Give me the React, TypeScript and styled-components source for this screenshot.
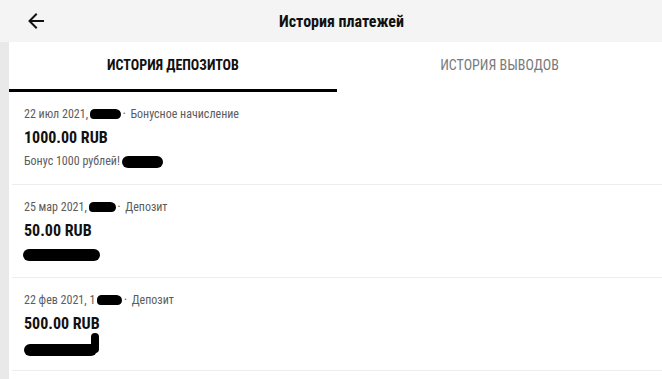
import React from "react";
import styled, { createGlobalStyle } from "styled-components";

const GlobalStyle = createGlobalStyle`
  html, body {
    margin: 0;
    padding: 0;
    background: #ffffff;
  }
  body {
    font-family: "Roboto Condensed", "Liberation Sans Narrow", Roboto, sans-serif;
    -webkit-font-smoothing: antialiased;
  }
`;

type Deposit = {
  date: string;
  hideWidth: number;
  kind: string;
  amount: string;
  note?: string;
  noteHide?: number;
  hook?: boolean;
};

const deposits: Deposit[] = [
  {
    date: "22 июл 2021,",
    hideWidth: 31,
    kind: "Бонусное начисление",
    amount: "1000.00 RUB",
    note: "Бонус 1000 рублей!",
    noteHide: 41,
  },
  {
    date: "25 мар 2021,",
    hideWidth: 27,
    kind: "Депозит",
    amount: "50.00 RUB",
  },
  {
    date: "22 фев 2021, 1",
    hideWidth: 25,
    kind: "Депозит",
    amount: "500.00 RUB",
    hook: true,
  },
];

function BackArrow() {
  return (
    <svg width="18" height="18" viewBox="0 0 18 18" fill="none">
      <path
        d="M16 9H3M9 2.5L2.5 9L9 15.5"
        stroke="#111"
        strokeWidth="2"
        strokeLinecap="square"
      />
    </svg>
  );
}

function DepositItem({ item }: { item: Deposit }) {
  return (
    <Item>
      <Meta>
        <span>{item.date}</span>
        <Blot $w={item.hideWidth} />
        <Dot>•</Dot>
        <span>{item.kind}</span>
      </Meta>
      <Amount>{item.amount}</Amount>
      <Note>
        {item.note ? (
          <>
            <span>{item.note}</span>
            <NoteBlot $w={item.noteHide ?? 40} />
          </>
        ) : item.hook ? (
          <HookBlot>
            <HookStem />
          </HookBlot>
        ) : (
          <WideBlot />
        )}
      </Note>
    </Item>
  );
}

export default function App() {
  return (
    <>
      <GlobalStyle />
      <Screen>
        <Header>
          <BackButton>
            <BackArrow />
          </BackButton>
          <Title>История платежей</Title>
        </Header>
        <Body>
          <Strip />
          <Content>
            <Tabs>
              <Tab $active>ИСТОРИЯ ДЕПОЗИТОВ</Tab>
              <Tab>ИСТОРИЯ ВЫВОДОВ</Tab>
            </Tabs>
            <List>
              {deposits.map((d) => (
                <DepositItem key={d.date} item={d} />
              ))}
            </List>
          </Content>
        </Body>
      </Screen>
    </>
  );
}

const Screen = styled.div`
  width: 662px;
  height: 379px;
  overflow: hidden;
  display: flex;
  flex-direction: column;
  background: #ffffff;
`;

const Header = styled.header`
  position: relative;
  height: 42px;
  flex-shrink: 0;
  display: flex;
  align-items: center;
  justify-content: center;
  background: #f4f4f4;
`;

const BackButton = styled.button`
  position: absolute;
  left: 27px;
  top: 12px;
  width: 18px;
  height: 18px;
  padding: 0;
  border: 0;
  background: none;
  display: flex;
`;

const Title = styled.h1`
  margin: 0 0 0 21px;
  font-size: 16px;
  font-weight: 700;
  color: #111;
`;

const Body = styled.div`
  flex: 1;
  display: flex;
`;

const Strip = styled.div`
  width: 9px;
  flex-shrink: 0;
  background: #e9e9e9;
`;

const Content = styled.div`
  flex: 1;
  display: flex;
  flex-direction: column;
`;

const Tabs = styled.nav`
  display: grid;
  grid-template-columns: 328px 1fr;
  height: 50px;
`;

const Tab = styled.div<{ $active?: boolean }>`
  display: flex;
  align-items: center;
  justify-content: center;
  padding-bottom: 1px;
  font-size: 14px;
  font-weight: ${({ $active }) => ($active ? 700 : 400)};
  color: ${({ $active }) => ($active ? "#111" : "#7a7a7a")};
  border-bottom: 3px solid ${({ $active }) => ($active ? "#000" : "transparent")};
  box-sizing: border-box;
`;

const List = styled.div`
  display: flex;
  flex-direction: column;
`;

const Item = styled.div`
  height: 93px;
  flex-shrink: 0;
  box-sizing: border-box;
  margin-left: 3px;
  padding: 14px 12px 0;
  border-bottom: 1px solid #ededed;
  display: flex;
  flex-direction: column;
`;

const Meta = styled.div`
  display: flex;
  align-items: center;
  height: 16px;
  font-size: 12px;
  color: #5c5c5c;
`;

const Blot = styled.span<{ $w: number }>`
  display: inline-block;
  width: ${({ $w }) => $w}px;
  height: 10px;
  margin-left: 2px;
  border-radius: 5px 6px 5px 4px;
  background: #000;
`;

const Dot = styled.span`
  margin: 0 5px 0 2px;
  font-size: 7px;
`;

const Amount = styled.div`
  margin-top: 7px;
  height: 18px;
  line-height: 18px;
  font-size: 16px;
  font-weight: 700;
  color: #111;
`;

const Note = styled.div`
  margin-top: 6px;
  height: 16px;
  display: flex;
  align-items: center;
  font-size: 12px;
  color: #5c5c5c;
`;

const NoteBlot = styled.span<{ $w: number }>`
  display: inline-block;
  width: ${({ $w }) => $w}px;
  height: 12px;
  margin: 2px 0 0 2px;
  border-radius: 6px;
  background: #000;
`;

const WideBlot = styled.span`
  display: inline-block;
  width: 77px;
  height: 12px;
  margin: 2px 0 0 -1px;
  border-radius: 6px;
  background: #000;
`;

const HookBlot = styled.span`
  position: relative;
  display: inline-block;
  width: 73px;
  height: 12px;
  margin-top: 6px;
  border-radius: 6px 4px 6px 6px;
  background: #000;
`;

const HookStem = styled.span`
  position: absolute;
  right: -2px;
  bottom: 3px;
  width: 8px;
  height: 20px;
  border-radius: 4px;
  background: #000;
`;
